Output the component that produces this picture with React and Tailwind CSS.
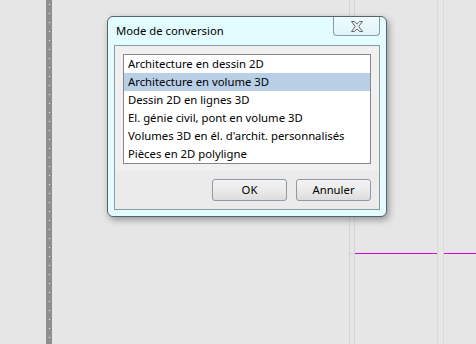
export default function App() {
  const items = [
    "Architecture en dessin 2D",
    "Architecture en volume 3D",
    "Dessin 2D en lignes 3D",
    "El. génie civil, pont en volume 3D",
    "Volumes 3D en él. d'archit. personnalisés",
    "Pièces en 2D polyligne",
  ];
  return (
    <div
      className="relative w-[476px] h-[344px] overflow-hidden bg-[#e6e6e6]"
      style={{ fontFamily: '"Noto Sans", "Open Sans", sans-serif' }}
    >
      {/* canvas elements */}
      <div className="absolute left-[46px] top-0 h-full w-[6px] bg-[#8e8e8e]">
        <div className="absolute left-[3px] top-[4px] bottom-0 w-px bg-[repeating-linear-gradient(to_bottom,#f2f2cc_0px,#f2f2cc_1px,transparent_1px,transparent_9px)]" />
      </div>
      <div className="absolute left-[349px] top-0 h-full w-px bg-[#d6d6d6]" />
      <div className="absolute left-[354px] top-0 h-full w-px bg-[#d6d6d6]" />
      <div className="absolute left-[437px] top-0 h-full w-px bg-[#d9d9d9]" />
      <div className="absolute left-[443px] top-0 h-full w-px bg-[#d9d9d9]" />
      <div className="absolute left-[349px] top-[253px] w-[6px] h-px bg-[#d0d0d0]" />
      <div className="absolute left-[355px] top-[253px] w-[82px] h-px bg-[#d000d8]" />
      <div className="absolute left-[444px] top-[253px] right-0 h-px bg-[#d000d8]" />

      {/* dialog */}
      <div className="absolute left-[107px] top-[16px] w-[280px] h-[201px] rounded-[6px] border border-[#56636d] bg-[#e3fcff] shadow-[2px_3px_7px_rgba(0,0,0,0.35)] flex flex-col">
        <div className="h-[28px] flex items-start justify-between">
          <span className="ml-[8px] mt-[6px] text-[11.3px] leading-[16px] text-black">
            Mode de conversion
          </span>
          <div className="mr-[6px] w-[47px] h-[19px] border border-t-0 border-[#8c9ba6] rounded-b-[4px] bg-gradient-to-b from-[#eefcff] to-[#e0f4f8] flex items-center justify-center">
            <svg width="14" height="11" viewBox="0 0 14 11">
              <path
                d="M1.5 0.5 H4.5 L7 3.2 L9.5 0.5 H12.5 L8.7 5.5 L12.5 10.5 H9.5 L7 7.8 L4.5 10.5 H1.5 L5.3 5.5 Z"
                fill="#f4f7fa"
                stroke="#5d6670"
                strokeWidth="1"
                strokeLinejoin="round"
              />
            </svg>
          </div>
        </div>
        <div className="mx-[6px] mb-[6px] flex-1 border border-[#8d9aa3] bg-[#f0f0f0] flex flex-col">
          <div className="px-[8px] pt-[8px] pb-[7px]">
            <div className="border border-[#828790] bg-white flex flex-col">
              {items.map((t, i) => (
                <div
                  key={t}
                  className={
                    "h-[18px] pl-[4px] text-[11.3px] leading-[18px] text-black whitespace-nowrap " +
                    (i === 1 ? "bg-[#b8cfe6]" : "")
                  }
                >
                  {t}
                </div>
              ))}
            </div>
          </div>
          <div className="flex-1 bg-[#ebebeb] flex items-start justify-end gap-[9px] pr-[8px] pt-[8px]">
            <button className="w-[75px] h-[22px] rounded-[3px] border border-[#8f9aa6] bg-gradient-to-b from-[#f3f3f3] via-[#ebebeb] to-[#dcdcdc] text-[11.3px] text-black leading-[20px]">
              OK
            </button>
            <button className="w-[75px] h-[22px] rounded-[3px] border border-[#8f9aa6] bg-gradient-to-b from-[#f3f3f3] via-[#ebebeb] to-[#dcdcdc] text-[11.3px] text-black leading-[20px]">
              Annuler
            </button>
          </div>
        </div>
      </div>
    </div>
  );
}
